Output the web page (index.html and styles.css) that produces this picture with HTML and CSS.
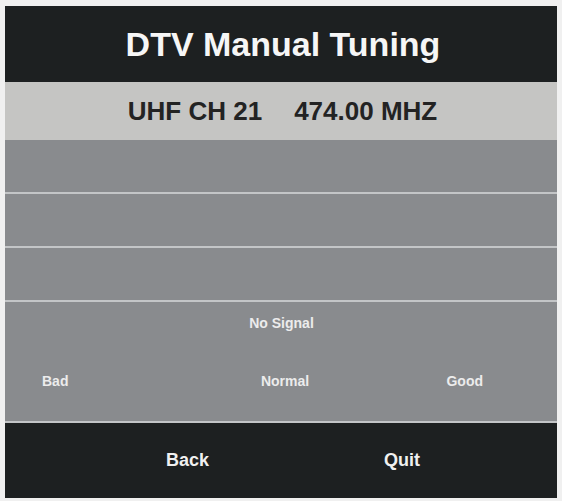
FILE: index.html
```html
<!DOCTYPE html>
<html>
<head>
<meta charset="utf-8">
<link rel="stylesheet" href="styles.css">
</head>
<body>
<div class="panel">
  <div class="header">DTV Manual Tuning</div>
  <div class="band"><span>UHF CH 21</span><span>474.00 MHZ</span></div>
  <div class="row"></div>
  <div class="row"></div>
  <div class="row"></div>
  <div class="signal">
    <div class="status">No Signal</div>
    <div class="scale">
      <span class="bad">Bad</span>
      <span class="normal">Normal</span>
      <span class="good">Good</span>
    </div>
  </div>
  <div class="footer"><span>Back</span><span>Quit</span></div>
</div>
</body>
</html>
```
FILE: styles.css
```css
html, body {
  margin: 0;
  padding: 0;
  background: #f0f0f0;
  font-family: "Liberation Sans", Arial, sans-serif;
  font-weight: bold;
}
.panel {
  margin: 6px 0 0 5px;
  width: 552px;
  display: flex;
  flex-direction: column;
}
.header {
  height: 76px;
  background: #1d2021;
  color: #f6f6f6;
  font-size: 34px;
  line-height: 76px;
  text-align: center;
  padding-left: 4px;
  box-sizing: border-box;
}
.band {
  height: 58px;
  background: #c5c5c3;
  color: #232323;
  font-size: 26px;
  display: flex;
  justify-content: center;
  align-items: center;
  gap: 32px;
  padding-left: 3px;
  box-sizing: border-box;
}
.row {
  height: 52px;
  background: #898b8e;
  border-bottom: 2px solid #c3c5c7;
}
.signal {
  height: 119px;
  background: #898b8e;
  border-bottom: 2px solid #c3c5c7;
  color: #ececec;
  font-size: 14px;
  line-height: 16px;
  padding-top: 13px;
  box-sizing: border-box;
  height: 121px;
}
.status {
  text-align: center;
  padding-left: 1px;
}
.scale {
  margin-top: 42px;
  display: grid;
  grid-template-columns: 253px 54px 1fr;
}
.bad {
  margin-left: 37px;
}
.normal {
  text-align: center;
}
.good {
  justify-self: end;
  margin-right: 74px;
}
.footer {
  height: 75px;
  background: #1d2021;
  color: #f0f0f0;
  font-size: 18px;
  display: flex;
  align-items: center;
  padding-left: 161px;
  gap: 175px;
}
```
